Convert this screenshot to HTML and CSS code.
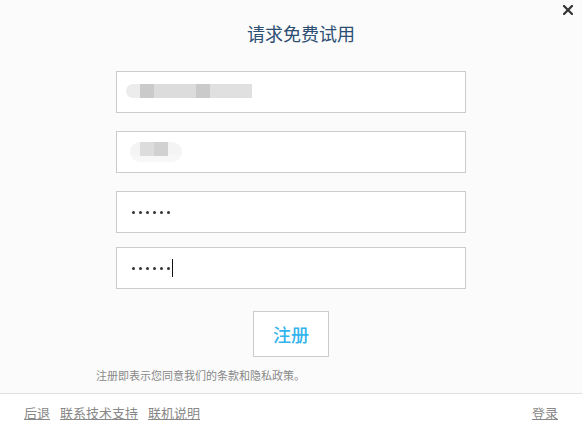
FILE: index.html
```html
<!DOCTYPE html>
<html lang="zh-CN">
<head>
  <meta charset="UTF-8">
  <title>请求免费试用</title>
  <link rel="stylesheet" href="styles.css">
</head>
<body>
  <div class="dialog">
    <svg class="close" width="10" height="10" viewBox="0 0 10 10">
      <path d="M1 1L9 9M9 1L1 9" stroke="#333" stroke-width="2.2" stroke-linecap="square"/>
    </svg>
    <div class="main">
      <h1 class="title">请求免费试用</h1>
      <div class="form">
        <div class="field blur-one">
          <span class="px px-a"></span><span class="px px-b"></span><span class="px px-c"></span><span class="px px-b"></span><span class="px px-d"></span>
        </div>
        <div class="field blur-two">
          <span class="pill"><span class="px px-c"></span><span class="px px-e"></span></span>
        </div>
        <div class="field pw">
          <span class="dot"></span><span class="dot"></span><span class="dot"></span><span class="dot"></span><span class="dot"></span><span class="dot"></span>
        </div>
        <div class="field pw last">
          <span class="dot"></span><span class="dot"></span><span class="dot"></span><span class="dot"></span><span class="dot"></span><span class="dot"></span><span class="caret"></span>
        </div>
      </div>
      <button class="submit">注册</button>
      <p class="note">注册即表示您同意我们的条款和隐私政策。</p>
    </div>
    <div class="footer">
      <div class="links">
        <a href="#">后退</a>
        <a href="#">联系技术支持</a>
        <a href="#">联机说明</a>
      </div>
      <a href="#">登录</a>
    </div>
  </div>
</body>
</html>
```

FILE: styles.css
```css
body {
  margin: 0;
  font-family: "Noto Sans CJK SC", "Noto Sans", sans-serif;
  background: #fbfbfb;
}
.dialog {
  position: relative;
  width: 582px;
  height: 431px;
  display: flex;
  flex-direction: column;
}
.close {
  position: absolute;
  top: 5px;
  right: 9px;
}
.main {
  flex: 1;
  display: flex;
  flex-direction: column;
  align-items: center;
}
.title {
  margin: 20px 0 0 20px;
  font-size: 18px;
  font-weight: normal;
  line-height: 26px;
  color: #2c4e72;
}
.form {
  margin-top: 25px;
  width: 350px;
  display: flex;
  flex-direction: column;
  gap: 18px;
}
.field {
  box-sizing: border-box;
  height: 42px;
  border: 1px solid #cbcbcb;
  background: #fff;
  display: flex;
  align-items: center;
}
.field.last {
  margin-top: -4px;
}
.blur-one {
  padding-left: 9px;
}
.blur-one .px:first-child {
  border-radius: 7px 0 0 7px;
}
.px {
  display: inline-block;
  height: 14px;
  width: 14px;
  margin-top: -2px;
}
.px-a { background: #ececec; }
.px-b { background: #cacaca; }
.px-c { background: #dcdcdc; width: 42px; }
.px-d { background: #e0e0e0; width: 42px; }
.blur-two {
  padding-left: 13px;
}
.pill {
  display: flex;
  padding: 0 14px 0 10px;
  height: 20px;
  border-radius: 10px;
  background: linear-gradient(#f4f4f4 0, #f4f4f4 65%, #f7f7f7 65%);
}
.pill .px {
  margin-top: 0;
}
.pill .px-c { width: 14px; }
.px-e { background: #d1d1d1; }
.pw {
  padding-left: 15px;
  gap: 4px;
}
.dot {
  width: 3px;
  height: 3px;
  border-radius: 50%;
  background: #333;
}
.caret {
  width: 1px;
  height: 18px;
  background: #111;
  margin-left: -2px;
}
.submit {
  margin-top: 22px;
  width: 76px;
  height: 46px;
  border: 1px solid #cbcbcb;
  background: #fff;
  color: #33b4ee;
  font-family: inherit;
  font-size: 18px;
  font-weight: 500;
  cursor: pointer;
}
.note {
  align-self: flex-start;
  margin: 10px 0 0 96px;
  font-size: 11px;
  color: #888;
}
.footer {
  height: 37px;
  border-top: 1px solid #e0e0e0;
  background: #fff;
  display: flex;
  justify-content: space-between;
  align-items: center;
  padding: 0 24px;
}
.links {
  display: flex;
  gap: 10px;
}
.footer a {
  font-size: 13px;
  color: #888;
}
```
